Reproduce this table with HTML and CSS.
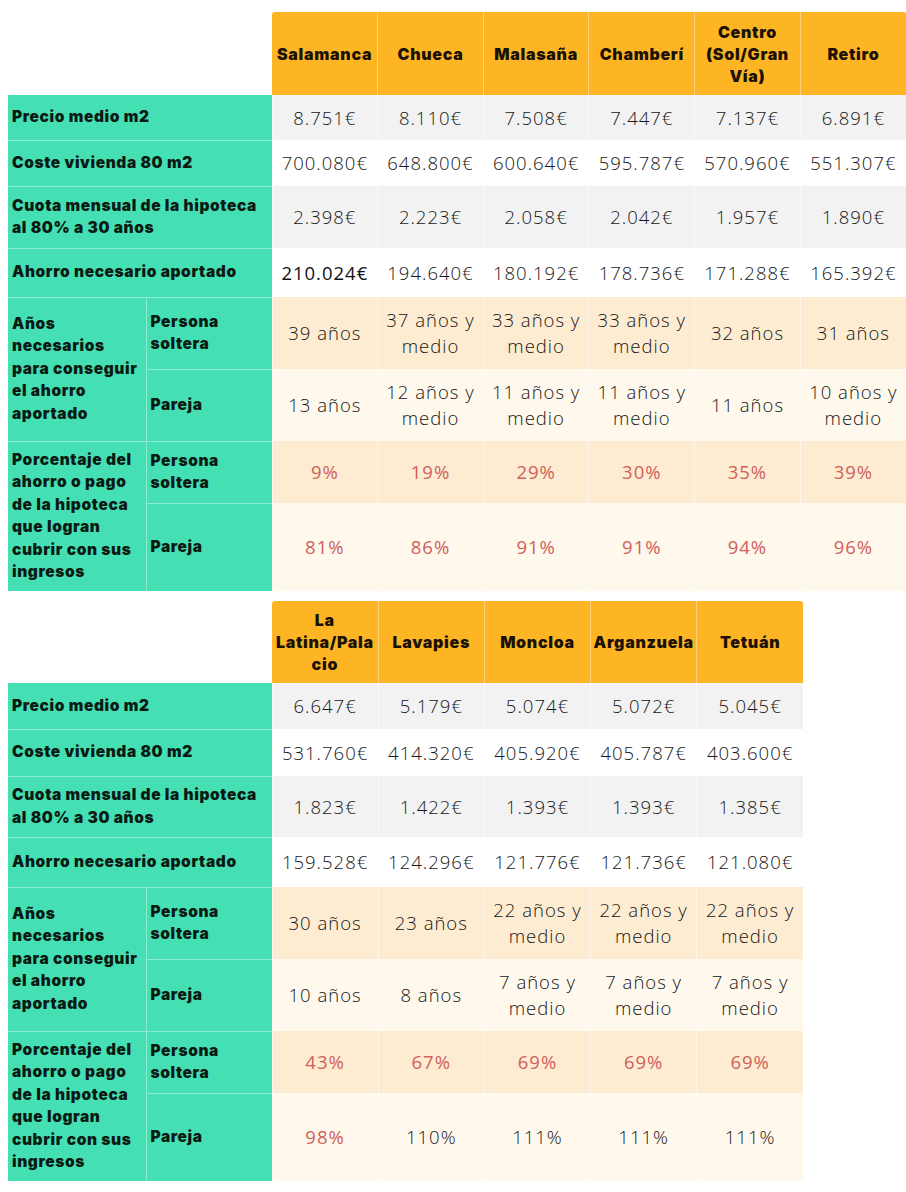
FILE: index.html
```html
<!DOCTYPE html>
<html lang="es">
<head>
<meta charset="utf-8">
<title>Tabla vivienda Madrid</title>
<link rel="stylesheet" href="styles.css">
</head>
<body>
<div class="page">
<table class="grid grid-6">
  <colgroup><col class="c-lab1"><col class="c-lab2"><col span="6" class="c-data6"></colgroup>
  <thead>
    <tr class="r-head">
      <th colspan="2" class="blank"></th>
      <th class="hd first">Salamanca</th>
      <th class="hd">Chueca</th>
      <th class="hd">Malasaña</th>
      <th class="hd">Chamberí</th>
      <th class="hd">Centro<br>(Sol/Gran<br>Vía)</th>
      <th class="hd last">Retiro</th>
    </tr>
  </thead>
  <tbody>
    <tr class="r-a gray">
      <th colspan="2" class="lab">Precio medio m2</th>
      <td>8.751€</td><td>8.110€</td><td>7.508€</td><td>7.447€</td><td>7.137€</td><td>6.891€</td>
    </tr>
    <tr class="r-b white">
      <th colspan="2" class="lab">Coste vivienda 80 m2</th>
      <td>700.080€</td><td>648.800€</td><td>600.640€</td><td>595.787€</td><td>570.960€</td><td>551.307€</td>
    </tr>
    <tr class="r-c gray">
      <th colspan="2" class="lab">Cuota mensual de la hipoteca<br>al 80% a 30 años</th>
      <td>2.398€</td><td>2.223€</td><td>2.058€</td><td>2.042€</td><td>1.957€</td><td>1.890€</td>
    </tr>
    <tr class="r-d white">
      <th colspan="2" class="lab">Ahorro necesario aportado</th>
      <td class="dark">210.024€</td><td>194.640€</td><td>180.192€</td><td>178.736€</td><td>171.288€</td><td>165.392€</td>
    </tr>
    <tr class="r-e peach">
      <th rowspan="2" class="lab">Años<br>necesarios<br>para conseguir<br>el ahorro<br>aportado</th>
      <th class="lab sub">Persona<br>soltera</th>
      <td>39 años</td><td>37 años y<br>medio</td><td>33 años y<br>medio</td><td>33 años y<br>medio</td><td>32 años</td><td>31 años</td>
    </tr>
    <tr class="r-e cream">
      <th class="lab sub">Pareja</th>
      <td>13 años</td><td>12 años y<br>medio</td><td>11 años y<br>medio</td><td>11 años y<br>medio</td><td>11 años</td><td>10 años y<br>medio</td>
    </tr>
    <tr class="r-f peach">
      <th rowspan="2" class="lab">Porcentaje del<br>ahorro o pago<br>de la hipoteca<br>que logran<br>cubrir con sus<br>ingresos</th>
      <th class="lab sub">Persona<br>soltera</th>
      <td class="pct">9%</td><td class="pct">19%</td><td class="pct">29%</td><td class="pct">30%</td><td class="pct">35%</td><td class="pct">39%</td>
    </tr>
    <tr class="r-g cream">
      <th class="lab sub">Pareja</th>
      <td class="pct">81%</td><td class="pct">86%</td><td class="pct">91%</td><td class="pct">91%</td><td class="pct">94%</td><td class="pct">96%</td>
    </tr>
  </tbody>
</table>

<table class="grid grid-5">
  <colgroup><col class="c-lab1"><col class="c-lab2"><col span="5" class="c-data5"></colgroup>
  <thead>
    <tr class="r-head">
      <th colspan="2" class="blank"></th>
      <th class="hd first">La<br>Latina/Pala<br>cio</th>
      <th class="hd">Lavapies</th>
      <th class="hd">Moncloa</th>
      <th class="hd">Arganzuela</th>
      <th class="hd last">Tetuán</th>
    </tr>
  </thead>
  <tbody>
    <tr class="r-a gray">
      <th colspan="2" class="lab">Precio medio m2</th>
      <td>6.647€</td><td>5.179€</td><td>5.074€</td><td>5.072€</td><td>5.045€</td>
    </tr>
    <tr class="r-b white">
      <th colspan="2" class="lab">Coste vivienda 80 m2</th>
      <td>531.760€</td><td>414.320€</td><td>405.920€</td><td>405.787€</td><td>403.600€</td>
    </tr>
    <tr class="r-c gray">
      <th colspan="2" class="lab">Cuota mensual de la hipoteca<br>al 80% a 30 años</th>
      <td>1.823€</td><td>1.422€</td><td>1.393€</td><td>1.393€</td><td>1.385€</td>
    </tr>
    <tr class="r-d white">
      <th colspan="2" class="lab">Ahorro necesario aportado</th>
      <td>159.528€</td><td>124.296€</td><td>121.776€</td><td>121.736€</td><td>121.080€</td>
    </tr>
    <tr class="r-e peach">
      <th rowspan="2" class="lab">Años<br>necesarios<br>para conseguir<br>el ahorro<br>aportado</th>
      <th class="lab sub">Persona<br>soltera</th>
      <td>30 años</td><td>23 años</td><td>22 años y<br>medio</td><td>22 años y<br>medio</td><td>22 años y<br>medio</td>
    </tr>
    <tr class="r-e cream">
      <th class="lab sub">Pareja</th>
      <td>10 años</td><td>8 años</td><td>7 años y<br>medio</td><td>7 años y<br>medio</td><td>7 años y<br>medio</td>
    </tr>
    <tr class="r-f peach">
      <th rowspan="2" class="lab">Porcentaje del<br>ahorro o pago<br>de la hipoteca<br>que logran<br>cubrir con sus<br>ingresos</th>
      <th class="lab sub">Persona<br>soltera</th>
      <td class="pct">43%</td><td class="pct">67%</td><td class="pct">69%</td><td class="pct">69%</td><td class="pct">69%</td>
    </tr>
    <tr class="r-g cream">
      <th class="lab sub">Pareja</th>
      <td class="pct">98%</td><td>110%</td><td>111%</td><td>111%</td><td>111%</td>
    </tr>
  </tbody>
</table>
</div>
</body>
</html>
```

FILE: styles.css
```css
html, body {
  margin: 0;
  padding: 0;
  background: #ffffff;
  overflow-x: hidden;
}

.page {
  padding: 12px 0 0 8px;
  display: flex;
  flex-direction: column;
  gap: 10px;
  align-items: flex-start;
}

.grid {
  border-collapse: collapse;
  border-spacing: 0;
  table-layout: fixed;
  font-family: "Inter", "Liberation Sans", sans-serif;
}

.grid-6 { width: 898px; }
.grid-5 { width: 795px; }

.c-lab1 { width: 138px; }
.c-lab2 { width: 126px; }
.c-data6 { width: 105.67px; }
.c-data5 { width: 106.2px; }

.r-head { height: 83px; }
.r-a { height: 45px; }
.r-b { height: 46px; }
.r-c { height: 62px; }
.r-d { height: 49px; }
.r-e { height: 72px; }
.r-f { height: 62px; }
.r-g { height: 88px; }

.grid-5 .r-head { height: 82px; }
.grid-5 .r-a { height: 46px; }
.grid-5 .r-b { height: 47px; }
.grid-5 .r-c { height: 61px; }
.grid-5 .r-d { height: 50px; }

.blank {
  background: #ffffff;
  padding: 0;
}

.hd {
  background: #fdb524;
  color: #1b1205;
  font-size: 16px;
  font-weight: 900;
  line-height: 22px;
  letter-spacing: 0.7px;
  text-align: center;
  vertical-align: middle;
  padding: 0;
  border-left: 1px solid #fdd07a;
}

.hd.first {
  border-left: none;
  border-top-left-radius: 3px;
}

.hd.last {
  border-top-right-radius: 3px;
}

.lab {
  background: #44e0b4;
  color: #0b1a13;
  font-size: 15.5px;
  font-weight: 900;
  line-height: 22.5px;
  letter-spacing: 0.6px;
  text-align: left;
  vertical-align: middle;
  padding: 0 0 0 4px;
  border-top: 1px solid #8aebcf;
  white-space: nowrap;
}

.lab.sub {
  border-left: 1px solid #8aebcf;
  padding-left: 4px;
}

tbody tr:first-child .lab {
  border-top: none;
}

td {
  font-family: "Open Sans", "Inter", sans-serif;
  font-size: 18.5px;
  font-weight: 300;
  line-height: 26px;
  letter-spacing: 1px;
  color: #161616;
  text-align: center;
  vertical-align: middle;
  padding: 0;
  white-space: nowrap;
  border-left: 1px solid rgba(255, 255, 255, 0.55);
}

td.dark {
  font-weight: 400;
  color: #111111;
}

td.pct {
  color: #d0605b;
  font-weight: 400;
}

.gray td { background: #f2f2f3; }
.white td { background: #ffffff; }
.peach td { background: #fdecd2; }
.cream td { background: #fef8ed; }
```
